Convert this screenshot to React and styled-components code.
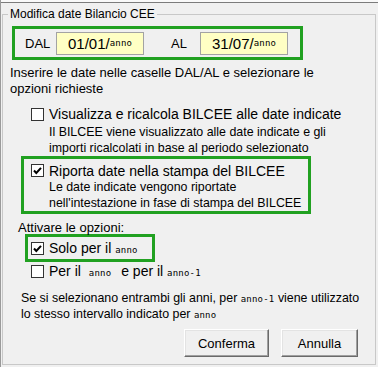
import React from 'react';
import styled, { createGlobalStyle } from 'styled-components';

const GlobalStyle = createGlobalStyle`
  html, body {
    margin: 0;
    padding: 0;
    background: #f0f0f0;
  }
  body {
    font-family: "Liberation Sans", Arial, sans-serif;
    color: #000;
  }
`;

const Window = styled.div`
  width: 378px;
  height: 367px;
  box-sizing: border-box;
  background: #f0f0f0;
  border-left: 1px solid #9a9a9a;
  overflow: hidden;
`;

const TopEdge = styled.div`
  height: 2px;
  background: #f9f9f9;
  border-bottom: 1px solid #7c7c7c;
`;

const Group = styled.fieldset`
  margin: 3px 0 0 1px;
  padding: 0;
  width: 374px;
  height: 359px;
  box-sizing: border-box;
  min-width: 0;
  border: 1px solid #c8c8c8;
`;

const Legend = styled.legend`
  margin-left: 5px;
  padding: 0 2px;
  font-size: 12px;
  line-height: 16px;
`;

const GreenBox = styled.div`
  box-sizing: border-box;
  border: 3px solid #21a121;
  width: ${p => p.$w}px;
  height: ${p => (p.$h ? `${p.$h}px` : 'auto')};
  margin: ${p => p.$m};
  padding: ${p => p.$pad || '0'};
`;

const DateRow = styled.div`
  display: flex;
  align-items: center;
  height: 100%;
  padding-left: 10px;
  font-size: 13px;
`;

const DateLabel = styled.span`
  width: ${p => p.$w}px;
`;

const DateField = styled.div`
  box-sizing: border-box;
  width: 88px;
  height: 23px;
  background: #ffffc4;
  border: 1px solid #a3a3a3;
  padding-left: 11px;
  display: flex;
  align-items: center;
  font-size: 15px;
`;

const Tiny = styled.span`
  font-family: "DejaVu Sans Mono", "Liberation Mono", monospace;
  font-size: 9px;
  letter-spacing: 0.2px;
  margin: ${p => p.$m || '0'};
`;

const Text = styled.div`
  font-size: ${p => p.$size || 13}px;
  line-height: ${p => p.$lh || 16}px;
  margin: ${p => p.$m || '0'};
  white-space: nowrap;
`;

const OptionRow = styled.div`
  display: flex;
  align-items: center;
  gap: 5px;
  height: ${p => p.$h || 18}px;
  margin: ${p => p.$m || '0'};
  font-size: 14px;
  white-space: nowrap;
`;

const Box = styled.span`
  flex: none;
  box-sizing: border-box;
  width: 13px;
  height: 13px;
  background: #fff;
  border: 1px solid #333;
  display: flex;
  align-items: center;
  justify-content: center;
`;

const ButtonBar = styled.div`
  display: flex;
  justify-content: flex-end;
  gap: 12px;
  padding-right: 17px;
  margin-top: 6px;
`;

const Button = styled.button`
  box-sizing: border-box;
  width: ${p => p.$w}px;
  height: 28px;
  font-family: "Liberation Sans", Arial, sans-serif;
  font-size: 13px;
  color: #000;
  background: #f0f0f0;
  border: 1px solid;
  border-color: #fff #6a6a6a #6a6a6a #fff;
  box-shadow: inset -1px -1px 0 #a0a0a0, inset 1px 1px 0 #e3e3e3;
  padding: 0;
`;

function Checkbox({ checked }) {
  return (
    <Box>
      {checked ? (
        <svg width="11" height="11" viewBox="0 0 11 11">
          <path d="M2 5.5 L4.3 8 L9 2.8" fill="none" stroke="#000" strokeWidth="2" />
        </svg>
      ) : null}
    </Box>
  );
}

export default function App() {
  return (
    <Window>
      <GlobalStyle />
      <TopEdge />
      <Group>
        <Legend>Modifica date Bilancio CEE</Legend>

        <GreenBox $w={291} $h={34} $m="4px 0 0 9px">
          <DateRow>
            <DateLabel $w={31}>DAL</DateLabel>
            <DateField>01/01/<Tiny>anno</Tiny></DateField>
            <DateLabel $w={29} style={{ marginLeft: 27 }}>AL</DateLabel>
            <DateField>31/07/<Tiny>anno</Tiny></DateField>
          </DateRow>
        </GreenBox>

        <Text $m="5px 0 0 7px">
          Inserire le date nelle caselle DAL/AL e selezionare le<br />
          opzioni richieste
        </Text>

        <OptionRow $m="8px 0 0 28px">
          <Checkbox />
          <span>Visualizza e ricalcola BILCEE alle date indicate</span>
        </OptionRow>
        <Text $size={12.4} $m="1px 0 0 46px">
          Il BILCEE viene visualizzato alle date indicate e gli<br />
          importi ricalcolati in base al periodo selezionato
        </Text>

        <GreenBox $w={290} $m="0 0 0 18px" $pad="3px 0 0 7px">
          <OptionRow $h={17}>
            <Checkbox checked />
            <span>Riporta date nella stampa del BILCEE</span>
          </OptionRow>
          <Text $size={12.4} $m="0 0 0 18px">
            Le date indicate vengono riportate<br />
            nell'intestazione in fase di stampa del BILCEE
          </Text>
        </GreenBox>

        <Text $lh={14} $m="7px 0 0 15px">Attivare le opzioni:</Text>

        <GreenBox $w={130} $h={28} $m="-1px 0 0 22px" $pad="0 0 0 3px">
          <OptionRow $h={22}>
            <Checkbox checked />
            <span>Solo per il <Tiny>anno</Tiny></span>
          </OptionRow>
        </GreenBox>

        <OptionRow $m="0 0 0 28px">
          <Checkbox />
          <span>Per il <Tiny $m="0 6px 0 4px">anno</Tiny> e per il <Tiny>anno-1</Tiny></span>
        </OptionRow>

        <Text $size={12.4} $lh={15} $m="11px 0 0 18px">
          Se si selezionano entrambi gli anni, per <Tiny>anno-1</Tiny> viene utilizzato<br />
          lo stesso intervallo indicato per <Tiny>anno</Tiny>
        </Text>

        <ButtonBar>
          <Button $w={85}>Conferma</Button>
          <Button $w={77}>Annulla</Button>
        </ButtonBar>
      </Group>
    </Window>
  );
}
